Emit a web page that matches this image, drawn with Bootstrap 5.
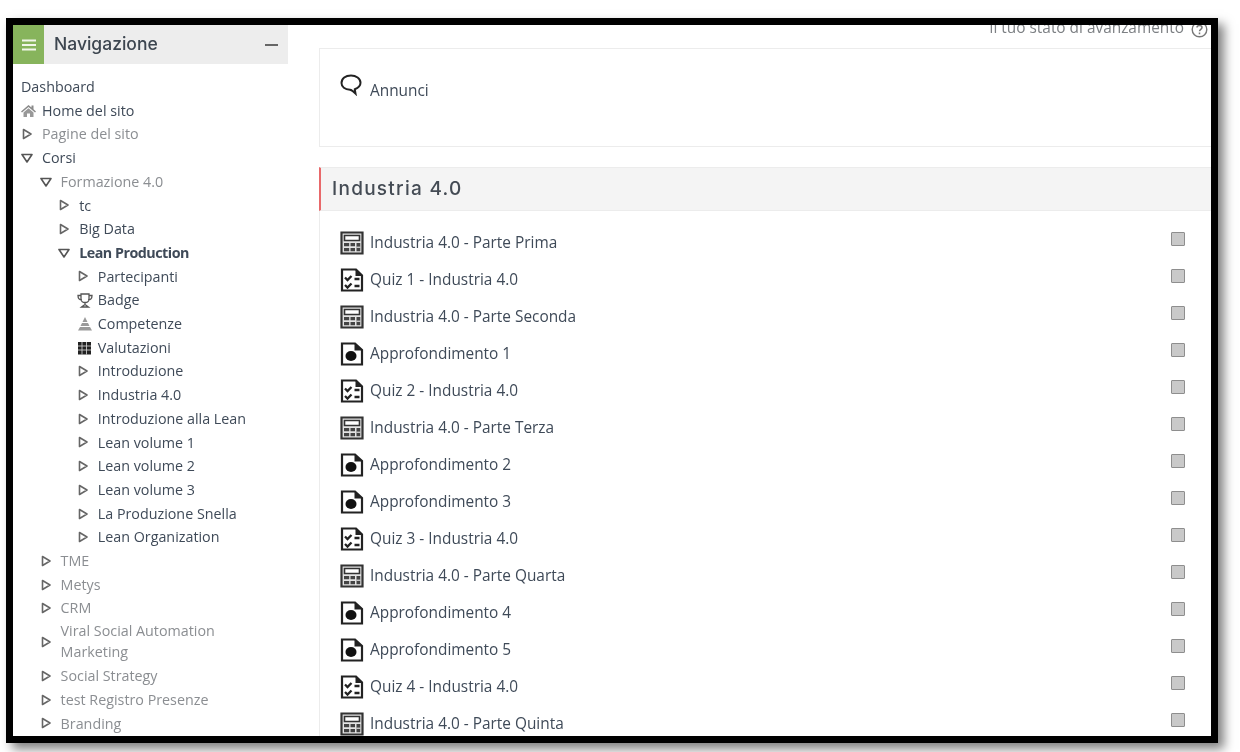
<!DOCTYPE html>
<html lang="it">
<head>
<meta charset="utf-8">
<title>Industria 4.0</title>
<link href="https://cdn.jsdelivr.net/npm/bootstrap@5.3.0/dist/css/bootstrap.min.css" rel="stylesheet">
<style>
html,body{height:100%;overflow:hidden;background:#fff}
body{font-family:"Open Sans","Liberation Sans",sans-serif;font-size:14.3px;color:#3f4a58;padding:18px 22px 9px 6px}
.shot-frame{height:725px;border:7px solid #000;box-shadow:6px 6px 10px rgba(0,0,0,.5);overflow:hidden;background:#fff}
.shot-inner{height:100%;filter:blur(.45px)}
.side-col{width:275px;flex:none}
.side-head{height:39px;background:#ededed}
.side-burger{width:31px;background:#87b45c}
.side-title{font-family:Inter,"Liberation Sans",sans-serif;font-size:17.5px;font-weight:500;color:#3d4650;margin-left:10px}
.side-min{width:13px;height:2px;background:#666;margin-right:10px}
.tree{margin:0;padding:0;list-style:none;line-height:23.7px;white-space:nowrap}
.tree ul{margin:0;padding:0 0 0 18.6px;list-style:none}
.tree-body{padding:11px 0 0 8px}
.tree-row{display:flex;align-items:center}
.tree-ico{width:21px;flex:none;display:flex;align-items:center}
.tree-dim{color:#8b8e92}
.tree-bold{font-weight:700;letter-spacing:-.5px}
.tree-wrap{white-space:normal;line-height:21px;width:190px;padding:0 0 2px}
.main-col{margin-left:31px;min-width:0}
.status-line{height:23px;line-height:5px;text-align:right;color:#7d8084;font-size:15.4px;padding-right:3px}
.status-help{display:inline-block;vertical-align:top;margin:-4px 0 0 7px}
.news-box{height:99px;border:1px solid #ececec;padding:25px 0 0 20px;border-right:0}
.sect-head{height:44px;margin-top:20px;background:#f4f4f4;border:1px solid #ececec;border-left:2px solid #e8686a;border-right:0;padding-left:11px;font-family:Inter,"Liberation Sans",sans-serif;font-size:19px;font-weight:500;letter-spacing:1.27px;color:#444b54}
.sect-body{border-left:1px solid #ececec;padding:13px 0 0 20px}
.act-row{height:37px;padding-right:26px}
.act-ico{width:24px;height:24px;margin-right:6px;flex:none}
.act-text{color:#3f4a58;font-size:15.4px}
.act-check{width:14px;height:14px;background:#c9c9c9;border:1px solid #8e8e8e;margin-top:-8px;border-radius:1px}
.news-text{font-size:15.4px;margin-top:5px}
</style>
</head>
<body>
<svg width="0" height="0" class="position-absolute">
<defs>
<symbol id="i-closed" viewBox="0 0 12 12"><path d="M2.500 1.500 10 6 2.500 10.500Z" fill="none" stroke="#666" stroke-width="1.600" stroke-linejoin="round"/></symbol>
<symbol id="i-open" viewBox="0 0 12 12"><path d="M1 2.500H11L6 10Z" fill="none" stroke="#555" stroke-width="1.600" stroke-linejoin="round"/></symbol>
<symbol id="i-calc" viewBox="0 0 24 24"><path d="M1.500 1.500H22.500V22.500H1.500Z" fill="#e4e4e4" stroke="#333" stroke-width="2.200"/><path d="M4.500 4.500H19.500V9.500H4.500Z" fill="#fff" stroke="#333" stroke-width="1.600"/><path d="M4 12H9.200V15.300H4ZM10.500 12H15V15.300H10.500ZM4 17H9.200V20.300H4ZM10.500 17H15V20.300H10.500ZM16.500 12H20.300V20.300H16.500Z" fill="#444"/><path d="M16.500 16.200H20.300" stroke="#fff"/></symbol>
<symbol id="i-quiz" viewBox="0 0 24 24"><path d="M2 1.500H16L22 7.500V22.500H2Z" fill="#fff" stroke="#222" stroke-width="2.200"/><path d="M15.500 1.500V8H22Z" fill="#222"/><path d="M5 9.500 7.500 12 11.500 8M5 17 7.500 19.500 11.500 15.500" fill="none" stroke="#222" stroke-width="2.300"/><path d="M14.500 11H19.500M14.500 18H19.500" stroke="#222" stroke-width="2.300"/></symbol>
<symbol id="i-file" viewBox="0 0 24 24"><path d="M2 1.500H15L22 8V22.500H2Z" fill="#fff" stroke="#222" stroke-width="2.200"/><path d="M14.500 1.500V8.500H22Z" fill="#222"/><ellipse cx="11" cy="14" rx="5.500" ry="5" fill="#111"/></symbol>
</defs>
</svg>
<div class="shot-frame">
<div class="shot-inner d-flex">
<aside class="side-col">
  <div class="side-head d-flex align-items-center">
    <div class="side-burger h-100 d-flex align-items-center justify-content-center">
      <svg width="14" height="12" viewBox="0 0 14 12"><path d="M0 1.500H14M0 6H14M0 10.500H14" stroke="#f1f6ea" stroke-width="2"/></svg>
    </div>
    <span class="side-title flex-grow-1">Navigazione</span>
    <span class="side-min"></span>
  </div>
  <div class="tree-body">
  <ul class="tree">
    <li>Dashboard</li>
    <li class="tree-row"><span class="tree-ico"><svg width="15" height="13" viewBox="0 0 15 13"><path d="M7.500 1 0 7.500 1 8.500 7.500 3 14 8.500 15 7.500 12.500 5.300V1.500H10.500V3.500Z" fill="#8a8a8a"/><path d="M2.500 8.500 7.500 4.300 12.500 8.500V13H9V9.500H6V13H2.500Z" fill="#999"/></svg></span>Home del sito</li>
    <li class="tree-row tree-dim"><span class="tree-ico"><svg width="12" height="12"><use href="#i-closed"/></svg></span>Pagine del sito</li>
    <li class="tree-row"><span class="tree-ico"><svg width="12" height="12"><use href="#i-open"/></svg></span>Corsi</li>
    <li><ul>
      <li class="tree-row tree-dim"><span class="tree-ico"><svg width="12" height="12"><use href="#i-open"/></svg></span>Formazione 4.0</li>
      <li><ul>
        <li class="tree-row"><span class="tree-ico"><svg width="12" height="12"><use href="#i-closed"/></svg></span>tc</li>
        <li class="tree-row"><span class="tree-ico"><svg width="12" height="12"><use href="#i-closed"/></svg></span>Big Data</li>
        <li class="tree-row tree-bold"><span class="tree-ico"><svg width="12" height="12"><use href="#i-open"/></svg></span>Lean Production</li>
        <li><ul>
          <li class="tree-row"><span class="tree-ico"><svg width="12" height="12"><use href="#i-closed"/></svg></span>Partecipanti</li>
          <li class="tree-row"><span class="tree-ico"><svg width="16" height="15" viewBox="0 0 16 15"><path d="M4 1H12V6C12 8.500 10 9.500 8 9.500S4 8.500 4 6ZM4 2.500H1C1 5.500 2.500 7 5 7M12 2.500H15C15 5.500 13.500 7 11 7M8 9.500V11.500M4.500 14 8 11.500 11.500 14Z" fill="none" stroke="#555" stroke-width="1.300"/></svg></span>Badge</li>
          <li class="tree-row"><span class="tree-ico"><svg width="16" height="15" viewBox="0 0 16 15"><path d="M8 1 10.500 6H5.500ZM5 7H11L12.500 10H3.500ZM3 11H13L15 14.500H1Z" fill="#9a9a9a"/></svg></span>Competenze</li>
          <li class="tree-row"><span class="tree-ico"><svg width="15" height="14" viewBox="0 0 15 14"><path d="M1 1H14V13.500H1Z" fill="#222"/><path d="M1 5H14M1 9H14M5 1V13.500M9.500 1V13.500" stroke="#ddd" stroke-width=".8"/></svg></span>Valutazioni</li>
          <li class="tree-row"><span class="tree-ico"><svg width="12" height="12"><use href="#i-closed"/></svg></span>Introduzione</li>
          <li class="tree-row"><span class="tree-ico"><svg width="12" height="12"><use href="#i-closed"/></svg></span>Industria 4.0</li>
          <li class="tree-row"><span class="tree-ico"><svg width="12" height="12"><use href="#i-closed"/></svg></span>Introduzione alla Lean</li>
          <li class="tree-row"><span class="tree-ico"><svg width="12" height="12"><use href="#i-closed"/></svg></span>Lean volume 1</li>
          <li class="tree-row"><span class="tree-ico"><svg width="12" height="12"><use href="#i-closed"/></svg></span>Lean volume 2</li>
          <li class="tree-row"><span class="tree-ico"><svg width="12" height="12"><use href="#i-closed"/></svg></span>Lean volume 3</li>
          <li class="tree-row"><span class="tree-ico"><svg width="12" height="12"><use href="#i-closed"/></svg></span>La Produzione Snella</li>
          <li class="tree-row"><span class="tree-ico"><svg width="12" height="12"><use href="#i-closed"/></svg></span>Lean Organization</li>
        </ul></li>
      </ul></li>
      <li class="tree-row tree-dim"><span class="tree-ico"><svg width="12" height="12"><use href="#i-closed"/></svg></span>TME</li>
      <li class="tree-row tree-dim"><span class="tree-ico"><svg width="12" height="12"><use href="#i-closed"/></svg></span>Metys</li>
      <li class="tree-row tree-dim"><span class="tree-ico"><svg width="12" height="12"><use href="#i-closed"/></svg></span>CRM</li>
      <li class="tree-row tree-dim"><span class="tree-ico"><svg width="12" height="12"><use href="#i-closed"/></svg></span><span class="tree-wrap">Viral Social Automation Marketing</span></li>
      <li class="tree-row tree-dim"><span class="tree-ico"><svg width="12" height="12"><use href="#i-closed"/></svg></span>Social Strategy</li>
      <li class="tree-row tree-dim"><span class="tree-ico"><svg width="12" height="12"><use href="#i-closed"/></svg></span>test Registro Presenze</li>
      <li class="tree-row tree-dim"><span class="tree-ico"><svg width="12" height="12"><use href="#i-closed"/></svg></span>Branding</li>
    </ul></li>
  </ul>
  </div>
</aside>
<main class="main-col flex-grow-1">
  <div class="status-line">Il tuo stato di avanzamento<svg class="status-help" width="17" height="17" viewBox="0 0 17 17"><circle cx="8.500" cy="8.500" r="7.300" fill="none" stroke="#777" stroke-width="1.400"/><path d="M6 6.500C6 3.800 11 3.800 11 6.500 11 8.300 8.500 8.300 8.500 10.200M8.500 11.500V13.200" fill="none" stroke="#777" stroke-width="1.500"/></svg></div>
  <div class="news-box d-flex align-items-start">
    <svg class="me-2" width="22" height="22" viewBox="0 0 22 22"><path d="M11 1.500C5.500 1.500 1.500 4.500 1.500 9 1.500 13 5 15.500 10 15.800 11.500 16 13.500 17.500 15.500 19.500L14.800 15.300C18 14 20.500 12 20.500 8.800 20.500 4.500 16 1.500 11 1.500Z" fill="none" stroke="#222" stroke-width="2"/></svg>
    <span class="news-text">Annunci</span>
  </div>
  <div class="sect-head d-flex align-items-center">Industria 4.0</div>
  <div class="sect-body">
    <div class="act-row d-flex align-items-center"><svg class="act-ico"><use href="#i-calc"/></svg><span class="act-text flex-grow-1">Industria 4.0 - Parte Prima</span><span class="act-check"></span></div>
    <div class="act-row d-flex align-items-center"><svg class="act-ico"><use href="#i-quiz"/></svg><span class="act-text flex-grow-1">Quiz 1 - Industria 4.0</span><span class="act-check"></span></div>
    <div class="act-row d-flex align-items-center"><svg class="act-ico"><use href="#i-calc"/></svg><span class="act-text flex-grow-1">Industria 4.0 - Parte Seconda</span><span class="act-check"></span></div>
    <div class="act-row d-flex align-items-center"><svg class="act-ico"><use href="#i-file"/></svg><span class="act-text flex-grow-1">Approfondimento 1</span><span class="act-check"></span></div>
    <div class="act-row d-flex align-items-center"><svg class="act-ico"><use href="#i-quiz"/></svg><span class="act-text flex-grow-1">Quiz 2 - Industria 4.0</span><span class="act-check"></span></div>
    <div class="act-row d-flex align-items-center"><svg class="act-ico"><use href="#i-calc"/></svg><span class="act-text flex-grow-1">Industria 4.0 - Parte Terza</span><span class="act-check"></span></div>
    <div class="act-row d-flex align-items-center"><svg class="act-ico"><use href="#i-file"/></svg><span class="act-text flex-grow-1">Approfondimento 2</span><span class="act-check"></span></div>
    <div class="act-row d-flex align-items-center"><svg class="act-ico"><use href="#i-file"/></svg><span class="act-text flex-grow-1">Approfondimento 3</span><span class="act-check"></span></div>
    <div class="act-row d-flex align-items-center"><svg class="act-ico"><use href="#i-quiz"/></svg><span class="act-text flex-grow-1">Quiz 3 - Industria 4.0</span><span class="act-check"></span></div>
    <div class="act-row d-flex align-items-center"><svg class="act-ico"><use href="#i-calc"/></svg><span class="act-text flex-grow-1">Industria 4.0 - Parte Quarta</span><span class="act-check"></span></div>
    <div class="act-row d-flex align-items-center"><svg class="act-ico"><use href="#i-file"/></svg><span class="act-text flex-grow-1">Approfondimento 4</span><span class="act-check"></span></div>
    <div class="act-row d-flex align-items-center"><svg class="act-ico"><use href="#i-file"/></svg><span class="act-text flex-grow-1">Approfondimento 5</span><span class="act-check"></span></div>
    <div class="act-row d-flex align-items-center"><svg class="act-ico"><use href="#i-quiz"/></svg><span class="act-text flex-grow-1">Quiz 4 - Industria 4.0</span><span class="act-check"></span></div>
    <div class="act-row d-flex align-items-center"><svg class="act-ico"><use href="#i-calc"/></svg><span class="act-text flex-grow-1">Industria 4.0 - Parte Quinta</span><span class="act-check"></span></div>
  </div>
</main>
</div>
</div>
</body>
</html>
